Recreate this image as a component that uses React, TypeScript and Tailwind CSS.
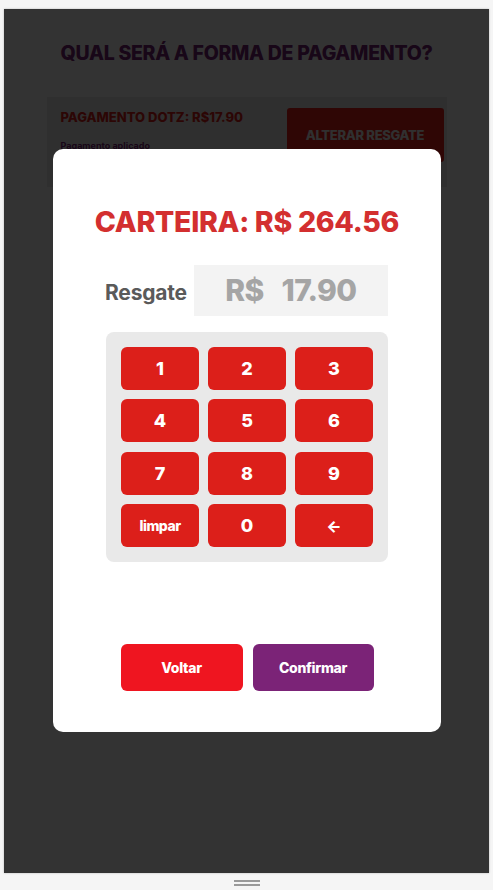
const keys = ["1", "2", "3", "4", "5", "6", "7", "8", "9", "limpar", "0", "back"];

function KeyButton({ label }: { label: string }) {
  return (
    <button className="h-[43px] rounded-md bg-[#dc1f1a] text-white font-extrabold flex items-center justify-center">
      {label === "back" ? (
        <span className="text-[16px] leading-none">&#8592;</span>
      ) : label === "limpar" ? (
        <span className="text-[14px] tracking-[-0.5px]">limpar</span>
      ) : (
        <span className="text-[18px]">{label}</span>
      )}
    </button>
  );
}

export default function App() {
  return (
    <div className="min-h-screen bg-[#f5f5f5] pt-[9px] px-[4px] font-['Inter',sans-serif]">
      <div className="relative h-[864px] bg-white shadow-[0_0_2px_rgba(0,0,0,0.25)] overflow-hidden">
        {/* pagina por baixo do modal */}
        <div className="flex flex-col items-center pt-[30px]">
          <h1 className="text-[19.5px] font-extrabold text-[#7b2377] tracking-[-0.3px]">
            QUAL SERÁ A FORMA DE PAGAMENTO?
          </h1>
          <div className="mt-[29px] w-[400px] h-[90px] bg-[#ebebeb] flex justify-between pl-[14px] pr-[3px] pt-[11px]">
            <div className="flex flex-col">
              <span className="text-[13px] font-extrabold text-[#dc1f1a]">PAGAMENTO DOTZ: R$17.90</span>
              <span className="mt-[11px] text-[9px] font-bold text-[#7b2377]">Pagamento aplicado</span>
            </div>
            <button className="w-[157px] h-[54px] rounded-[3px] bg-[#e8201a] text-[#eeeeee] text-[13px] font-extrabold tracking-[-0.3px]">
              ALTERAR RESGATE
            </button>
          </div>
        </div>

        <div className="absolute inset-0 bg-black/80" />

        {/* modal */}
        <div className="absolute left-[49px] top-[140px] w-[388px] h-[583px] bg-white rounded-[10px] flex flex-col items-center">
          <h2 className="mt-[52px] text-[28.5px] font-extrabold text-[#d32f2f] tracking-[-0.3px]">
            CARTEIRA: R$ 264.56
          </h2>
          <div className="mt-[21px] flex items-center gap-[7px] self-start ml-[52px]">
            <span className="mt-[4px] text-[21px] font-bold text-[#5a5a5a] tracking-[-0.2px]">Resgate</span>
            <div className="w-[194px] h-[51px] bg-[#f3f3f3] flex items-center justify-center">
              <span className="text-[30px] font-extrabold text-[#a5a5a5] tracking-[-0.6px] whitespace-pre">R$   17.90</span>
            </div>
          </div>
          <div className="mt-[16px] w-[282px] rounded-lg bg-[#e9e9e9] p-[15px] grid grid-cols-3 gap-x-[9px] gap-y-[9.5px]">
            {keys.map((k) => (
              <KeyButton key={k} label={k} />
            ))}
          </div>
          <div className="mt-[82px] flex gap-[10px]">
            <button className="w-[122px] h-[47px] rounded-md bg-[#ef1520] text-white text-[14px] font-extrabold tracking-[-0.3px]">
              Voltar
            </button>
            <button className="w-[121px] h-[47px] rounded-md bg-[#7b2377] text-white text-[14px] font-extrabold tracking-[-0.3px]">
              Confirmar
            </button>
          </div>
        </div>
      </div>
      <div className="flex justify-center pt-[7px] pb-[3px]">
        <div className="w-[26px] flex flex-col gap-[2px]">
          <div className="h-[2px] bg-[#9a9a9a]" />
          <div className="h-[2px] bg-[#9a9a9a]" />
        </div>
      </div>
    </div>
  );
}
